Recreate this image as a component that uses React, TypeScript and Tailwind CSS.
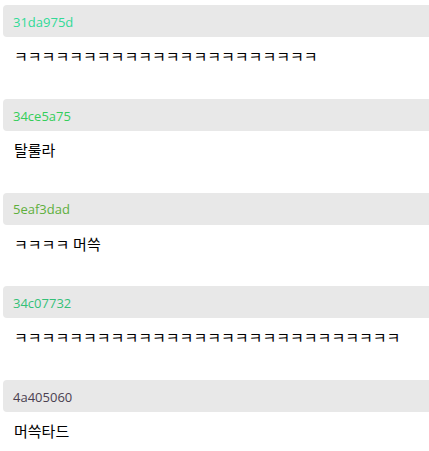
import React from 'react';

const posts = [
  { id: '31da975d', color: 'text-[#31da97]', body: 'ㅋㅋㅋㅋㅋㅋㅋㅋㅋㅋㅋㅋㅋㅋㅋㅋㅋㅋㅋㅋㅋㅋ' },
  { id: '34ce5a75', color: 'text-[#34ce5a]', body: '탈룰라' },
  { id: '5eaf3dad', color: 'text-[#5eaf3d]', body: 'ㅋㅋㅋㅋ 머쓱' },
  { id: '34c07732', color: 'text-[#34c077]', body: 'ㅋㅋㅋㅋㅋㅋㅋㅋㅋㅋㅋㅋㅋㅋㅋㅋㅋㅋㅋㅋㅋㅋㅋㅋㅋㅋㅋㅋ' },
  { id: '4a405060', color: 'text-[#4a4050]', body: '머쓱타드' },
];

export default function App() {
  return (
    <div className="bg-white pt-[5px] font-['Open_Sans','Noto_Sans_CJK_KR',sans-serif]">
      {posts.map((p) => (
        <div key={p.id} className="h-[93.75px] last:h-auto">
          {/* hash header */}
          <div className={`ml-[3px] flex h-8 items-center rounded-l-[4px] bg-[#e8e8e8] px-[10px] pt-[3px] text-[13px] ${p.color}`}>
            {p.id}
          </div>
          <p className="px-[14px] pt-[9px] text-[15px] leading-5 text-black">{p.body}</p>
        </div>
      ))}
    </div>
  );
}
